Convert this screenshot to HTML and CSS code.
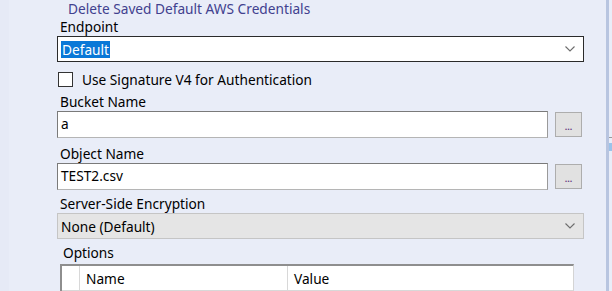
FILE: index.html
```html
<!DOCTYPE html>
<html>
<head>
<meta charset="utf-8">
<link rel="stylesheet" href="styles.css">
</head>
<body>
<div class="window">
  <div class="sidebar"></div>
  <div class="form">
    <div class="link">Delete Saved Default AWS Credentials</div>
    <div class="label">Endpoint</div>
    <div class="combo focused">
      <span class="sel">Default</span>
      <svg class="chev" width="10" height="6" viewBox="0 0 10 6"><path d="M0.5 0.5 L5 5 L9.5 0.5" fill="none" stroke="#6d6d6d" stroke-width="1.1"/></svg>
    </div>
    <div class="check-row">
      <span class="box"></span>
      <span class="check-label">Use Signature V4 for Authentication</span>
    </div>
    <div class="label l-bucket">Bucket Name</div>
    <div class="field-row">
      <div class="input">a</div>
      <div class="btn"><span class="dots">...</span></div>
    </div>
    <div class="label l-object">Object Name</div>
    <div class="field-row">
      <div class="input">TEST2.csv</div>
      <div class="btn"><span class="dots">...</span></div>
    </div>
    <div class="label l-sse">Server-Side Encryption</div>
    <div class="combo disabled">
      <span>None (Default)</span>
      <svg class="chev" width="10" height="6" viewBox="0 0 10 6"><path d="M0.5 0.5 L5 5 L9.5 0.5" fill="none" stroke="#6d6d6d" stroke-width="1.1"/></svg>
    </div>
    <div class="label l-options">Options</div>
    <div class="grid">
      <div class="grid-head">
        <div class="rowhead"></div>
        <div class="col col-name">Name</div>
        <div class="col col-value">Value</div>
      </div>
    </div>
  </div>
  <div class="scrollside">
    <div class="edge"></div>
    <div class="peek">
      <div class="peek-line"></div>
      <div class="peek-blue"></div>
    </div>
  </div>
</div>
</body>
</html>
```
FILE: styles.css
```css
html, body {
  margin: 0;
  padding: 0;
}
body {
  background: #e9edf8;
  font-family: "Noto Sans", "Open Sans", sans-serif;
  font-size: 13.7px;
  color: #000;
  width: 612px;
  height: 291px;
  overflow: hidden;
}
.window {
  display: flex;
  height: 291px;
}
.sidebar {
  width: 57px;
  flex: none;
  background: linear-gradient(to right, #e6eaf6 0, #e6eaf6 9px, #e9edf8 9px);
}
.form {
  width: 527px;
  flex: none;
  display: flex;
  flex-direction: column;
}
.link {
  color: #41418f;
  margin-left: 11px;
  margin-top: -1px;
  height: 19px;
  line-height: 19px;
  flex: none;
}
.label {
  padding-left: 3px;
  line-height: 18px;
  height: 18px;
  flex: none;
}
.combo {
  height: 26px;
  flex: none;
  box-sizing: border-box;
  display: flex;
  align-items: center;
  justify-content: space-between;
  padding: 0 8px 0 3px;
}
.combo.focused {
  background: #fff;
  border: 1px solid #2b2b2b;
}
.combo .sel {
  background: #0a78d7;
  color: #fff;
  padding: 0 1px;
  line-height: 17px;
}
.combo.disabled {
  background: #e5e5e5;
  border: 1px solid #c5c5c5;
}
.check-row {
  display: flex;
  align-items: center;
  margin-top: 10px;
  height: 15px;
  flex: none;
}
.box {
  width: 13px;
  height: 13px;
  border: 1px solid #333;
  background: #fff;
  margin-left: 1px;
  margin-right: 9px;
  flex: none;
}
.check-label {
  line-height: 15px;
}
.l-bucket { margin-top: 6px; }
.l-object { margin-top: 7px; }
.l-sse { margin-top: 5px; }
.l-options { margin-top: 5px; padding-left: 6px; }
.field-row {
  display: flex;
  align-items: center;
  gap: 7px;
  height: 27px;
  flex: none;
}
.input {
  width: 491px;
  height: 27px;
  box-sizing: border-box;
  background: #fff;
  border: 1px solid #7a7a7a;
  border-right-color: #9a9a9a;
  border-bottom-color: #b5b5b5;
  padding-left: 3px;
  line-height: 24px;
}
.btn {
  width: 27px;
  height: 25px;
  box-sizing: border-box;
  background: #e1e1e1;
  border: 1px solid #adadad;
  display: flex;
  align-items: center;
  justify-content: center;
}
.dots {
  font-size: 9px;
  font-weight: bold;
  color: #6a3f86;
  line-height: 9px;
  margin-top: 4px;
}
.grid {
  margin-top: 2px;
  margin-left: 3px;
  width: 514px;
  flex: 1;
  box-sizing: border-box;
  background: #fff;
  border-top: 2px solid #8e8e8e;
  border-left: 2px solid #8e8e8e;
  border-right: 1px solid #d4d4d4;
}
.grid-head {
  display: flex;
  height: 24px;
  border-bottom: 1px solid #d8d8d8;
}
.rowhead {
  width: 17px;
  border-right: 1px solid #d8d8d8;
}
.col {
  padding-left: 6px;
  line-height: 26px;
}
.col-name {
  width: 201px;
  border-right: 1px solid #d8d8d8;
}
.scrollside {
  flex: 1;
  display: flex;
  justify-content: flex-end;
}
.edge {
  width: 3px;
  background: #b8c5e0;
}
.peek {
  width: 3px;
  display: flex;
  flex-direction: column;
}
.peek-line {
  margin-top: 137px;
  height: 1px;
  background: #9a9a9a;
}
.peek-blue {
  margin-top: 5px;
  height: 8px;
  background: #9cc3ea;
}
```
